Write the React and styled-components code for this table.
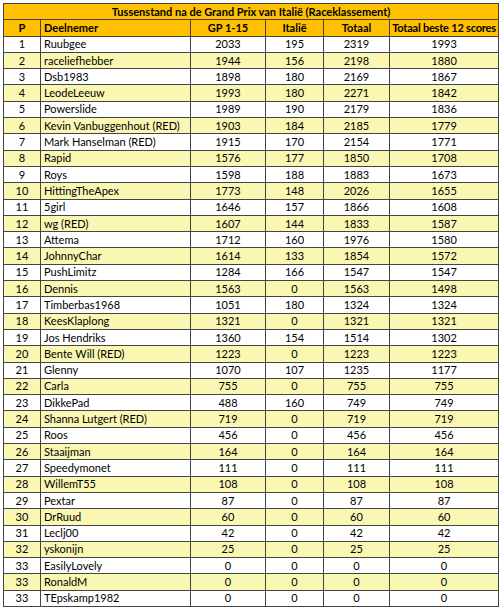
import React from "react";
import styled, { createGlobalStyle } from "styled-components";

const Global = createGlobalStyle`
  html, body { margin: 0; padding: 0; background: #ffffff; }
  body { font-family: Lato, "Open Sans", sans-serif; color: #000; }
`;

const Wrap = styled.div`
  padding: 3px 0 0 3px;
`;

const Table = styled.table`
  border-collapse: collapse;
  table-layout: fixed;
  width: 495px;
  font-size: 11px;
  border: 1px solid #333;
`;

const Row = styled.tr`
  height: 16.3px;
  background: ${(p) => (p.$alt ? "#faf7b3" : "#ffffff")};
`;

const HeadRow = styled.tr`
  height: 16.3px;
  background: #ffc000;
`;

const Cell = styled.td`
  border: 1px solid #444;
  padding: ${(p) => (p.$tight ? "0" : "0 3px")};
  letter-spacing: ${(p) => (p.$tight ? "-0.2px" : "normal")};
  line-height: 14px;
  white-space: nowrap;
  overflow: hidden;
  text-align: ${(p) => (p.$left ? "left" : "center")};
  font-weight: ${(p) => (p.$bold ? 700 : 400)};
`;

const data = [
  [1, "Ruubgee", 2033, 195, 2319, 1993],
  [2, "raceliefhebber", 1944, 156, 2198, 1880],
  [3, "Dsb1983", 1898, 180, 2169, 1867],
  [4, "LeodeLeeuw", 1993, 180, 2271, 1842],
  [5, "Powerslide", 1989, 190, 2179, 1836],
  [6, "Kevin Vanbuggenhout (RED)", 1903, 184, 2185, 1779],
  [7, "Mark Hanselman (RED)", 1915, 170, 2154, 1771],
  [8, "Rapid", 1576, 177, 1850, 1708],
  [9, "Roys", 1598, 188, 1883, 1673],
  [10, "HittingTheApex", 1773, 148, 2026, 1655],
  [11, "5girl", 1646, 157, 1866, 1608],
  [12, "wg (RED)", 1607, 144, 1833, 1587],
  [13, "Attema", 1712, 160, 1976, 1580],
  [14, "JohnnyChar", 1614, 133, 1854, 1572],
  [15, "PushLimitz", 1284, 166, 1547, 1547],
  [16, "Dennis", 1563, 0, 1563, 1498],
  [17, "Timberbas1968", 1051, 180, 1324, 1324],
  [18, "KeesKlaplong", 1321, 0, 1321, 1321],
  [19, "Jos Hendriks", 1360, 154, 1514, 1302],
  [20, "Bente Will (RED)", 1223, 0, 1223, 1223],
  [21, "Glenny", 1070, 107, 1235, 1177],
  [22, "Carla", 755, 0, 755, 755],
  [23, "DikkePad", 488, 160, 749, 749],
  [24, "Shanna Lutgert (RED)", 719, 0, 719, 719],
  [25, "Roos", 456, 0, 456, 456],
  [26, "Staaijman", 164, 0, 164, 164],
  [27, "Speedymonet", 111, 0, 111, 111],
  [28, "WillemT55", 108, 0, 108, 108],
  [29, "Pextar", 87, 0, 87, 87],
  [30, "DrRuud", 60, 0, 60, 60],
  [31, "Leclj00", 42, 0, 42, 42],
  [32, "yskonijn", 25, 0, 25, 25],
  [33, "EasilyLovely", 0, 0, 0, 0],
  [33, "RonaldM", 0, 0, 0, 0],
  [33, "TEpskamp1982", 0, 0, 0, 0],
];

const widths = [37, 150, 75, 58, 66, 109];

export default function App() {
  return (
    <>
      <Global />
      <Wrap>
        <Table>
          <colgroup>
            {widths.map((w, i) => (
              <col key={i} style={{ width: w }} />
            ))}
          </colgroup>
          <tbody>
            <HeadRow>
              <Cell colSpan={6} $bold>
                Tussenstand na de Grand Prix van Italië (Raceklassement)
              </Cell>
            </HeadRow>
            <HeadRow>
              <Cell $bold>P</Cell>
              <Cell $bold $left>Deelnemer</Cell>
              <Cell $bold>GP 1-15</Cell>
              <Cell $bold>Italië</Cell>
              <Cell $bold>Totaal</Cell>
              <Cell $bold $tight>Totaal beste 12 scores</Cell>
            </HeadRow>
            {data.map((r, i) => (
              <Row key={i} $alt={i % 2 === 1}>
                <Cell>{r[0]}</Cell>
                <Cell $left>{r[1]}</Cell>
                <Cell>{r[2]}</Cell>
                <Cell>{r[3]}</Cell>
                <Cell>{r[4]}</Cell>
                <Cell>{r[5]}</Cell>
              </Row>
            ))}
          </tbody>
        </Table>
      </Wrap>
    </>
  );
}
